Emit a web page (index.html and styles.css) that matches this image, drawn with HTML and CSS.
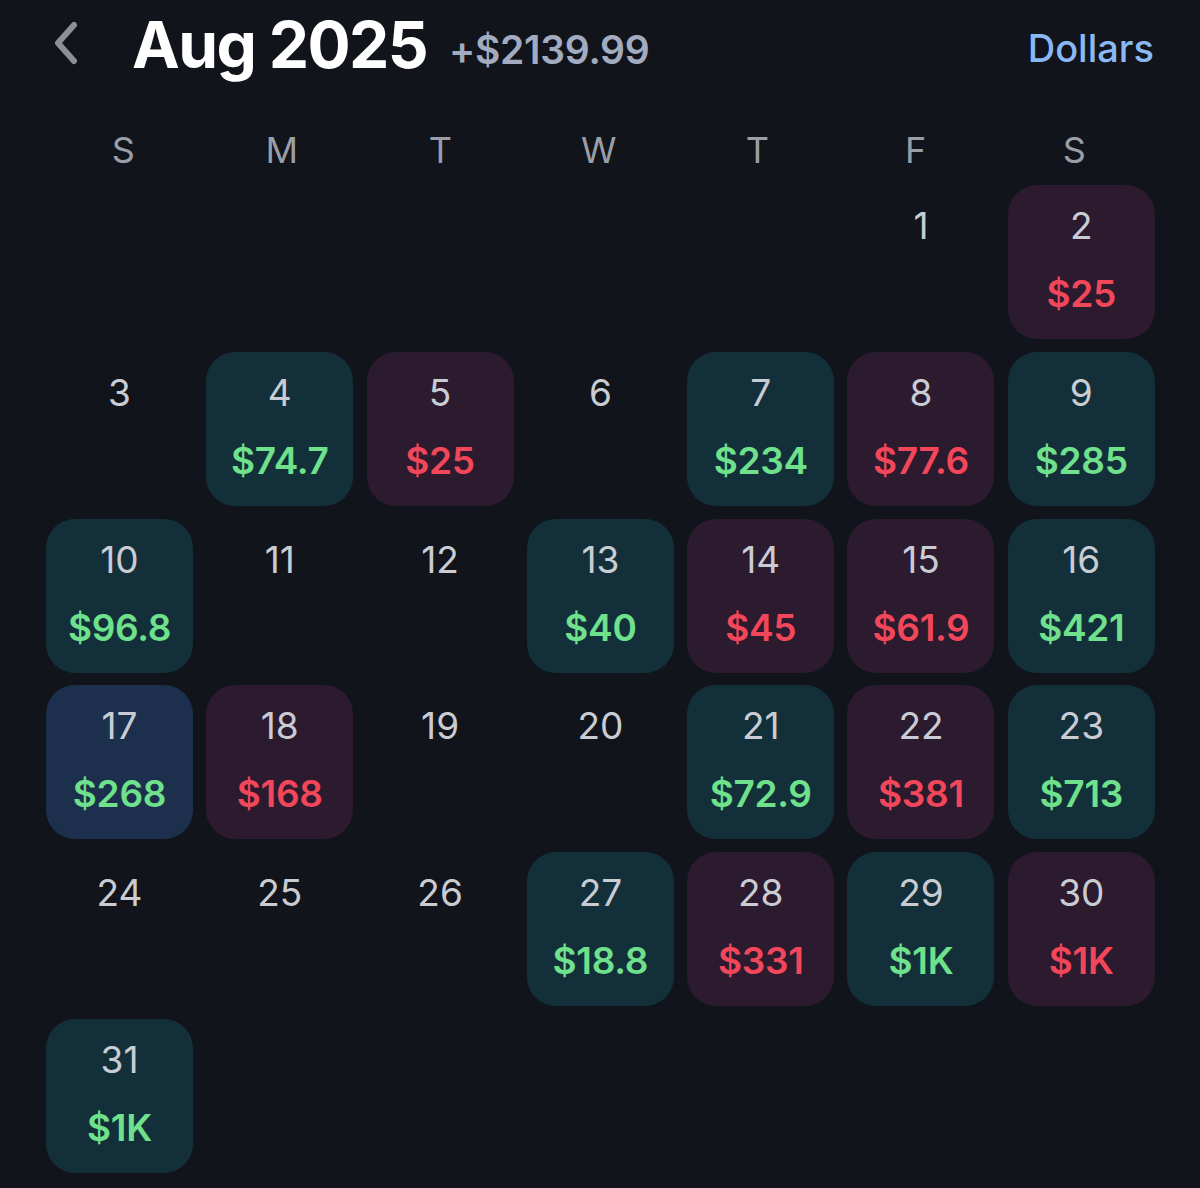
FILE: index.html
```html
<!DOCTYPE html>
<html>
<head>
<meta charset="utf-8">
<link rel="stylesheet" href="styles.css">
</head>
<body>
<div class="app">
  <header class="top">
    <svg class="back" width="34" height="44" viewBox="0 0 34 44"><polyline points="24,4 8,22 24,40" fill="none" stroke="#8e8f94" stroke-width="6" stroke-linecap="round" stroke-linejoin="round"/></svg>
    <h1 class="title">Aug 2025</h1>
    <span class="total">+$2139.99</span>
    <span class="unit">Dollars</span>
  </header>
  <div class="weekdays">
    <span>S</span><span>M</span><span>T</span><span>W</span><span>T</span><span>F</span><span>S</span>
  </div>
  <div class="grid">
    <div class="cell"></div><div class="cell"></div><div class="cell"></div><div class="cell"></div><div class="cell"></div>
    <div class="cell"><span class="d">1</span></div>
    <div class="cell loss"><span class="d">2</span><span class="amt">$25</span></div>

    <div class="cell"><span class="d">3</span></div>
    <div class="cell gain"><span class="d">4</span><span class="amt">$74.7</span></div>
    <div class="cell loss"><span class="d">5</span><span class="amt">$25</span></div>
    <div class="cell"><span class="d">6</span></div>
    <div class="cell gain"><span class="d">7</span><span class="amt">$234</span></div>
    <div class="cell loss"><span class="d">8</span><span class="amt">$77.6</span></div>
    <div class="cell gain"><span class="d">9</span><span class="amt">$285</span></div>

    <div class="cell gain"><span class="d">10</span><span class="amt">$96.8</span></div>
    <div class="cell"><span class="d">11</span></div>
    <div class="cell"><span class="d">12</span></div>
    <div class="cell gain"><span class="d">13</span><span class="amt">$40</span></div>
    <div class="cell loss"><span class="d">14</span><span class="amt">$45</span></div>
    <div class="cell loss"><span class="d">15</span><span class="amt">$61.9</span></div>
    <div class="cell gain"><span class="d">16</span><span class="amt">$421</span></div>

    <div class="cell today"><span class="d">17</span><span class="amt up">$268</span></div>
    <div class="cell loss"><span class="d">18</span><span class="amt">$168</span></div>
    <div class="cell"><span class="d">19</span></div>
    <div class="cell"><span class="d">20</span></div>
    <div class="cell gain"><span class="d">21</span><span class="amt">$72.9</span></div>
    <div class="cell loss"><span class="d">22</span><span class="amt">$381</span></div>
    <div class="cell gain"><span class="d">23</span><span class="amt">$713</span></div>

    <div class="cell"><span class="d">24</span></div>
    <div class="cell"><span class="d">25</span></div>
    <div class="cell"><span class="d">26</span></div>
    <div class="cell gain"><span class="d">27</span><span class="amt">$18.8</span></div>
    <div class="cell loss"><span class="d">28</span><span class="amt">$331</span></div>
    <div class="cell gain"><span class="d">29</span><span class="amt">$1K</span></div>
    <div class="cell loss"><span class="d">30</span><span class="amt">$1K</span></div>

    <div class="cell gain"><span class="d">31</span><span class="amt">$1K</span></div>
  </div>
</div>
</body>
</html>
```
FILE: styles.css
```css
html, body {
  margin: 0;
  padding: 0;
  background: #11141b;
}
body {
  font-family: Inter, "Noto Sans", "Liberation Sans", sans-serif;
  color: #c9ccd3;
}
.app {
  width: 1200px;
  height: 1188px;
  overflow: hidden;
}
.top {
  display: flex;
  align-items: center;
  height: 96px;
  padding: 0 46px 0 50px;
  box-sizing: border-box;
}
.back {
  display: block;
  margin-top: -10px;
}
.title {
  margin: -8px 0 0 48px;
  font-size: 64px;
  font-weight: 700;
  color: #ffffff;
  letter-spacing: -1.6px;
}
.total {
  margin: 2px 0 0 22px;
  font-size: 39px;
  font-weight: 600;
  color: #a2abbf;
  letter-spacing: -0.3px;
}
.unit {
  margin-left: auto;
  font-size: 38px;
  font-weight: 500;
  color: #8ab8f5;
}
.weekdays {
  display: grid;
  grid-template-columns: repeat(7, 158.5px);
  margin: 32px 0 0 44px;
  height: 44px;
  align-items: center;
}
.weekdays span {
  text-align: center;
  font-size: 36px;
  font-weight: 400;
  color: #9a9ea7;
}
.grid {
  display: grid;
  grid-template-columns: repeat(7, 147px);
  grid-auto-rows: 154px;
  column-gap: 13.3px;
  row-gap: 12.8px;
  margin: 13px 0 0 46px;
}
.cell {
  border-radius: 29px;
  display: flex;
  flex-direction: column;
  align-items: center;
}
.cell .d {
  margin-top: 20px;
  font-size: 37px;
  font-weight: 400;
  line-height: 42px;
  color: #c9ccd3;
}
.cell .amt {
  margin-top: 25px;
  font-size: 37px;
  font-weight: 600;
  line-height: 44px;
  letter-spacing: -0.3px;
}
.gain { background: #13303a; }
.gain .amt, .amt.up { color: #6fe08b; }
.loss { background: #2c1a2f; }
.loss .amt { color: #f2475a; }
.today { background: #1c304d; }
```
